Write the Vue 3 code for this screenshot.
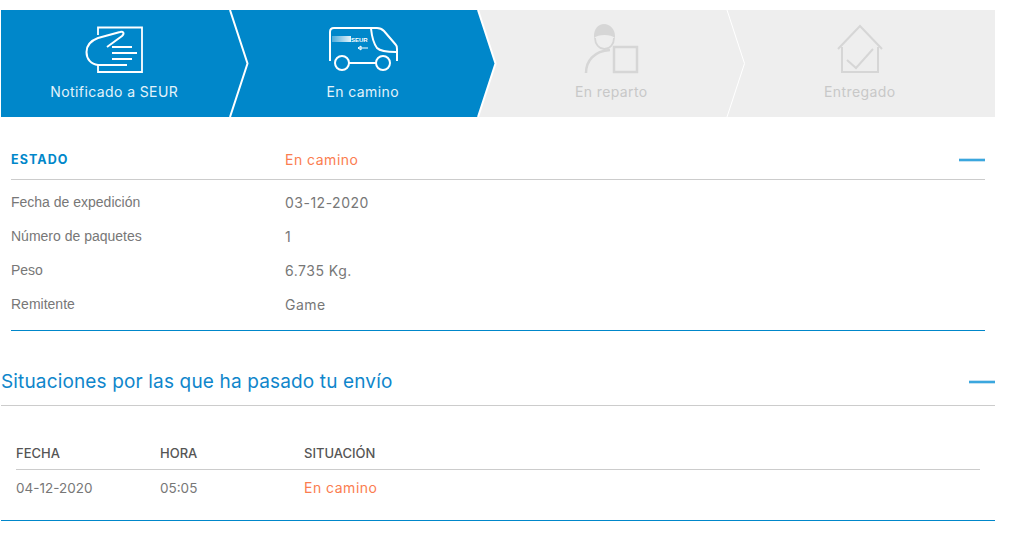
<template>
  <div class="page">
    <div class="steps">
      <div class="step is-done">
        <svg class="step__icon" width="70" height="52" viewBox="0 0 70 52" fill="none" stroke="#fff" stroke-width="1.800">
          <path d="M19 13V5.500H63V50H19V43" />
          <path d="M33 25H53M33 31H58M33 37H53M18 43H48" />
          <path d="M28 25L43 14C46 11 44 9 41 10L19 16C11 19 7.500 24 7.500 30C7.500 37 12 42.500 19 43" stroke-width="2" />
        </svg>
        <span>Notificado a SEUR</span>
        <svg class="step__edge" width="20" height="107" viewBox="0 0 20 107"><path d="M1 0L18.500 53.500L1 107" fill="none" stroke="#fff" stroke-width="2" /></svg>
      </div>
      <div class="step is-done is-current">
        <svg class="step__icon" width="70" height="52" viewBox="0 0 70 52" fill="none" stroke="#fff" stroke-width="2">
          <defs>
            <linearGradient id="stripe">
              <stop offset="0" stop-color="#fff" stop-opacity="0.3" />
              <stop offset="1" stop-color="#fff" stop-opacity="0.9" />
            </linearGradient>
          </defs>
          <g transform="translate(1 4)">
            <path d="M1 35V6C1 3 3 2 5 2H48C51 2 53 3 55 5L67 19C68 20 68 21 68 23V35" />
            <path d="M42 2.500C43 12 45 18 48 22C51 25 57 26 67 26" />
            <circle cx="13" cy="37" r="7" />
            <circle cx="54" cy="37" r="7" />
            <path d="M20 37H47" />
            <rect x="3" y="10" width="19" height="6" fill="url(#stripe)" stroke="none" />
            <text x="22" y="16" class="van-text" fill="#fff" stroke="none">SEUR</text>
            <path d="M29 22H39M29 22L32 20V24Z" stroke-width="1" />
          </g>
        </svg>
        <span>En camino</span>
        <svg class="step__edge" width="20" height="107" viewBox="0 0 20 107"><path d="M1 0L18.500 53.500L1 107" fill="#0087ca" stroke="#fff" stroke-width="2" /></svg>
      </div>
      <div class="step">
        <svg class="step__icon" width="70" height="52" viewBox="0 0 70 52" fill="none" stroke="#d6d6d6" stroke-width="2.500">
          <g transform="translate(8 1)">
            <path d="M10 13C10 6 14 1 20 1C26 1 31 6 31 13V15C27 11 14 11 10 15Z" fill="#d6d6d6" stroke="none" />
            <path d="M11 15C11 21 15 26 20.500 26C26 26 30 21 30 15" stroke-width="1.800" />
            <path d="M2 50C2 38 10 28 26 27" />
            <rect x="30" y="24" width="23" height="25" />
          </g>
        </svg>
        <span>En reparto</span>
        <svg class="step__edge" width="20" height="107" viewBox="0 0 20 107"><path d="M1 0L18.500 53.500L1 107" fill="none" stroke="#fff" stroke-width="1" /></svg>
      </div>
      <div class="step">
        <svg class="step__icon" width="70" height="52" viewBox="0 0 70 52" fill="none" stroke="#d6d6d6" stroke-width="2">
          <g transform="translate(1 2)">
            <path d="M12 25L34 2L56 25" />
            <path d="M16 23V48H52V23" />
            <path d="M21 36L30 44L47 25" />
          </g>
        </svg>
        <span>Entregado</span>
      </div>
    </div>

    <section class="status">
      <div class="status__head">
        <strong>ESTADO</strong>
        <span class="is-orange">En camino</span>
        <i class="minus"></i>
      </div>
      <div v-for="row in rows" :key="row.label" class="status__row">
        <span class="status__label">{{ row.label }}</span>
        <span class="status__value">{{ row.value }}</span>
      </div>
    </section>

    <section class="history">
      <div class="history__head">
        <h2>Situaciones por las que ha pasado tu envío</h2>
        <i class="minus"></i>
      </div>
      <div class="table">
        <div class="table__row table__row--head">
          <span>FECHA</span>
          <span>HORA</span>
          <span>SITUACIÓN</span>
        </div>
        <div class="table__row">
          <span>04-12-2020</span>
          <span>05:05</span>
          <span class="is-orange">En camino</span>
        </div>
      </div>
    </section>
  </div>
</template>

<script setup>
const rows = [
  { label: 'Fecha de expedición', value: '03-12-2020' },
  { label: 'Número de paquetes', value: '1' },
  { label: 'Peso', value: '6.735 Kg.' },
  { label: 'Remitente', value: 'Game' },
]
</script>

<style>
body {
  background: #fff;
}
</style>

<style scoped>
.page {
  width: 994px;
  margin-left: 1px;
  padding-top: 10px;
  color: #777;
  font-family: Inter, "Open Sans", sans-serif;
  font-size: 13.500px;
}

.steps {
  display: grid;
  grid-template-columns: repeat(4, 1fr);
  height: 107px;
  background: #eee;
}

.step {
  position: relative;
  display: flex;
  flex-direction: column;
  align-items: center;
  padding: 12px 22px 0 0;
  color: #c8c8c8;
  font-size: 14px;
  letter-spacing: 0.4px;
}

.step__icon {
  margin-bottom: 9px;
  overflow: visible;
}

.step.is-done {
  background: #0087ca;
  color: #e3f3fb;
}

.step.is-current {
  background: linear-gradient(#0087ca, #0087ca) no-repeat 0 0 / 228px 100%;
}

.step__edge {
  position: absolute;
  top: 0;
  left: 227.500px;
  z-index: 1;
}

.van-text {
  font: 700 6px "Liberation Sans", sans-serif;
  letter-spacing: 0;
}

.status {
  margin: 22px 10px 0;
  border-bottom: 1px solid #0087ca;
}

.status__head {
  position: relative;
  display: flex;
  align-items: center;
  height: 40px;
  border-bottom: 1px solid #ccc;
}

.status__head strong {
  width: 274px;
  color: #0087ca;
  font-size: 12.500px;
  letter-spacing: 1.100px;
}

.status__row {
  display: flex;
  align-items: center;
  height: 34px;
}

.status__row:nth-child(2) {
  margin-top: 5px;
}

.status__row:last-child {
  margin-bottom: 9px;
}

.status__label {
  width: 274px;
  color: #777;
  font-family: "Liberation Sans", sans-serif;
  font-size: 14px;
}

.status__value,
.is-orange {
  font-size: 14px;
  letter-spacing: 0.500px;
}

.is-orange {
  color: #fb7d4f;
}

.minus {
  position: absolute;
  right: 0;
  top: 50%;
  width: 26px;
  height: 2px;
  background: #3ba7de;
  box-shadow: 0 -1px #c4e2f3, 0 1px #c4e2f3;
}

.history__head {
  position: relative;
  display: flex;
  align-items: center;
  box-sizing: border-box;
  height: 75px;
  padding-top: 26px;
  border-bottom: 1px solid #ccc;
}

.history__head .minus {
  top: 50px;
}

.history__head h2 {
  margin: 0;
  color: #0f86cb;
  font-size: 19px;
  font-weight: 400;
  letter-spacing: 0.150px;
}

.history {
  border-bottom: 1px solid #0087ca;
}

.table {
  margin: 30px 15px 0;
  padding-bottom: 15px;
}

.table__row {
  display: grid;
  grid-template-columns: 144px 144px 1fr;
  align-items: center;
  height: 35px;
}

.table__row--head {
  height: 33px;
  border-bottom: 1px solid #ccc;
  color: #555;
  font-size: 13px;
  font-weight: 500;
}
</style>
